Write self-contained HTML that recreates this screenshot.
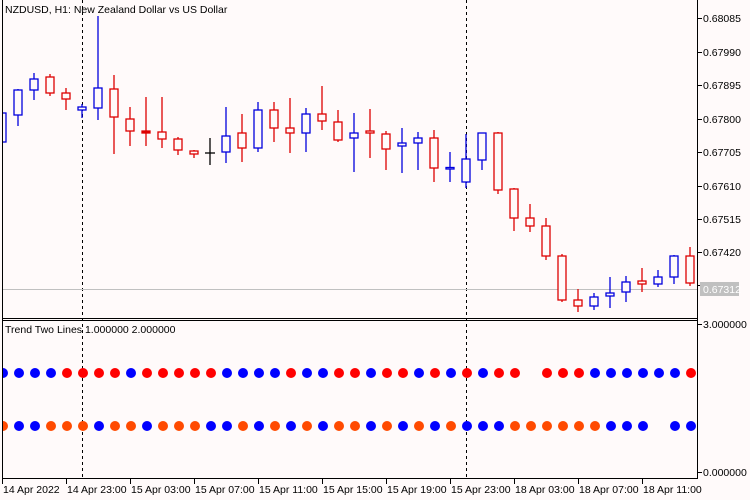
<!DOCTYPE html>
<html><head><meta charset="utf-8"><style>
html,body{margin:0;padding:0;background:#fffafa;}
svg{display:block;font-family:"Liberation Sans",sans-serif;font-size:10.5px;}
</style></head><body>
<svg width="750" height="500" viewBox="0 0 750 500" xmlns="http://www.w3.org/2000/svg">
<rect width="750" height="500" fill="#fffafa"/>
<!-- frames -->
<line x1="2.5" y1="0" x2="2.5" y2="479" stroke="#000"/>
<line x1="697.5" y1="0" x2="697.5" y2="479" stroke="#000"/>
<line x1="2" y1="318.5" x2="698" y2="318.5" stroke="#000"/>
<line x1="2" y1="320.5" x2="698" y2="320.5" stroke="#000"/>
<line x1="2" y1="478.5" x2="698" y2="478.5" stroke="#000"/>
<!-- dashed verticals -->
<line x1="82.5" y1="0" x2="82.5" y2="478" stroke="#000" stroke-dasharray="3,3"/>
<line x1="466.5" y1="0" x2="466.5" y2="478" stroke="#000" stroke-dasharray="3,3"/>
<!-- current price line -->
<line x1="3" y1="289.5" x2="697" y2="289.5" stroke="#c0c0c0"/>
<text x="5" y="13" fill="#000">NZDUSD, H1:  New Zealand Dollar vs US Dollar</text>
<!-- candles -->
<g stroke-width="1.3" fill="#fffafa">
<g stroke="#0000dd">
<line x1="2" y1="105" x2="2" y2="150"/><rect x="-2" y="113" width="8" height="29"/>
<line x1="18" y1="89" x2="18" y2="126"/><rect x="14" y="90" width="8" height="25"/>
<line x1="34" y1="73" x2="34" y2="100"/><rect x="30" y="79" width="8" height="11"/>
<line x1="82" y1="104" x2="82" y2="118"/><rect x="78" y="107" width="8" height="3"/>
<line x1="98" y1="16" x2="98" y2="120"/><rect x="94" y="88" width="8" height="20"/>
<line x1="226" y1="107" x2="226" y2="163"/><rect x="222" y="136" width="8" height="16"/>
<line x1="258" y1="102" x2="258" y2="152"/><rect x="254" y="110" width="8" height="38"/>
<line x1="306" y1="108" x2="306" y2="152"/><rect x="302" y="114" width="8" height="19"/>
<line x1="354" y1="113" x2="354" y2="172"/><rect x="350" y="133" width="8" height="5"/>
<line x1="402" y1="128" x2="402" y2="173"/><rect x="398" y="143" width="8" height="3"/>
<line x1="418" y1="132" x2="418" y2="170"/><rect x="414" y="138" width="8" height="5"/>
<line x1="450" y1="152" x2="450" y2="182"/><rect x="446" y="167.5" width="8" height="1.5"/>
<line x1="466" y1="134" x2="466" y2="188"/><rect x="462" y="159" width="8" height="23"/>
<line x1="482" y1="133" x2="482" y2="170"/><rect x="478" y="133" width="8" height="27"/>
<line x1="594" y1="293" x2="594" y2="310"/><rect x="590" y="297" width="8" height="9"/>
<line x1="610" y1="277" x2="610" y2="308"/><rect x="606" y="293" width="8" height="3"/>
<line x1="626" y1="276" x2="626" y2="302"/><rect x="622" y="282" width="8" height="10"/>
<line x1="658" y1="270" x2="658" y2="287"/><rect x="654" y="277" width="8" height="7"/>
<line x1="674" y1="255" x2="674" y2="284"/><rect x="670" y="256" width="8" height="21"/>
</g>
<g stroke="#dd0000">
<line x1="50" y1="74" x2="50" y2="96"/><rect x="46" y="77" width="8" height="16"/>
<line x1="66" y1="88" x2="66" y2="110"/><rect x="62" y="93" width="8" height="6"/>
<line x1="114" y1="75" x2="114" y2="154"/><rect x="110" y="89" width="8" height="28"/>
<line x1="130" y1="107" x2="130" y2="146"/><rect x="126" y="119" width="8" height="12"/>
<line x1="146" y1="97" x2="146" y2="146"/><rect x="142" y="131" width="8" height="2" fill="#dd0000"/>
<line x1="162" y1="97" x2="162" y2="148"/><rect x="158" y="132" width="8" height="7"/>
<line x1="178" y1="137" x2="178" y2="155"/><rect x="174" y="139" width="8" height="11"/>
<line x1="194" y1="150" x2="194" y2="158"/><rect x="190" y="151" width="8" height="3"/>
<line x1="242" y1="114" x2="242" y2="162"/><rect x="238" y="133" width="8" height="15"/>
<line x1="274" y1="102" x2="274" y2="142"/><rect x="270" y="110" width="8" height="18"/>
<line x1="290" y1="98" x2="290" y2="153"/><rect x="286" y="128" width="8" height="5"/>
<line x1="322" y1="86" x2="322" y2="130"/><rect x="318" y="114" width="8" height="7"/>
<line x1="338" y1="110" x2="338" y2="142"/><rect x="334" y="122" width="8" height="18"/>
<line x1="370" y1="109" x2="370" y2="158"/><rect x="366" y="131" width="8" height="2"/>
<line x1="386" y1="131" x2="386" y2="170"/><rect x="382" y="134" width="8" height="15"/>
<line x1="434" y1="130" x2="434" y2="182"/><rect x="430" y="138" width="8" height="30"/>
<line x1="498" y1="132" x2="498" y2="194"/><rect x="494" y="133" width="8" height="57"/>
<line x1="514" y1="188" x2="514" y2="231"/><rect x="510" y="189" width="8" height="29"/>
<line x1="530" y1="204" x2="530" y2="232"/><rect x="526" y="218" width="8" height="8"/>
<line x1="546" y1="218" x2="546" y2="260"/><rect x="542" y="226" width="8" height="30"/>
<line x1="562" y1="254" x2="562" y2="302"/><rect x="558" y="256" width="8" height="44"/>
<line x1="578" y1="289" x2="578" y2="312"/><rect x="574" y="300" width="8" height="6"/>
<line x1="642" y1="268" x2="642" y2="292"/><rect x="638" y="281" width="8" height="3"/>
<line x1="690" y1="247" x2="690" y2="286"/><rect x="686" y="256" width="8" height="27"/>
</g>
<g stroke="#000"><line x1="210" y1="138" x2="210" y2="165"/><line x1="205" y1="153" x2="215" y2="153"/></g>
</g>
<rect x="0" y="0" width="2" height="318" fill="#fffafa"/>
<line x1="2.5" y1="0" x2="2.5" y2="479" stroke="#000"/>
<!-- price axis -->
<g stroke="#000">
<line x1="697" y1="18.5" x2="702" y2="18.5"/><line x1="697" y1="52.5" x2="702" y2="52.5"/>
<line x1="697" y1="85.5" x2="702" y2="85.5"/><line x1="697" y1="119.5" x2="702" y2="119.5"/>
<line x1="697" y1="152.5" x2="702" y2="152.5"/><line x1="697" y1="186.5" x2="702" y2="186.5"/>
<line x1="697" y1="219.5" x2="702" y2="219.5"/><line x1="697" y1="252.5" x2="702" y2="252.5"/>
<line x1="697" y1="285.5" x2="702" y2="285.5"/>
<line x1="697" y1="324.5" x2="702" y2="324.5"/><line x1="697" y1="472.5" x2="702" y2="472.5"/>
</g>
<g fill="#000">
<text x="703" y="22">0.68085</text><text x="703" y="56">0.67990</text>
<text x="703" y="89">0.67895</text><text x="703" y="123">0.67800</text>
<text x="703" y="156">0.67705</text><text x="703" y="190">0.67610</text>
<text x="703" y="223">0.67515</text><text x="703" y="256">0.67420</text>
<text x="703" y="328">3.000000</text><text x="703" y="476">0.000000</text>
</g>
<rect x="700" y="282" width="39" height="14" fill="#c0c0c0"/>
<text x="703" y="293" fill="#fff">0.67312</text>
<!-- indicator -->
<text x="5" y="333" fill="#000">Trend Two Lines 1.000000 2.000000</text>
<g id="dots"></g>
<g>
<circle cx="3" cy="373" r="5" fill="#00f"/><circle cx="19" cy="373" r="5" fill="#00f"/><circle cx="35" cy="373" r="5" fill="#00f"/><circle cx="51" cy="373" r="5" fill="#00f"/><circle cx="67" cy="373" r="5" fill="#f00"/><circle cx="83" cy="373" r="5" fill="#f00"/><circle cx="99" cy="373" r="5" fill="#f00"/><circle cx="115" cy="373" r="5" fill="#f00"/><circle cx="131" cy="373" r="5" fill="#00f"/><circle cx="147" cy="373" r="5" fill="#f00"/><circle cx="163" cy="373" r="5" fill="#f00"/><circle cx="179" cy="373" r="5" fill="#f00"/><circle cx="195" cy="373" r="5" fill="#f00"/><circle cx="211" cy="373" r="5" fill="#f00"/><circle cx="227" cy="373" r="5" fill="#00f"/><circle cx="243" cy="373" r="5" fill="#00f"/>
<circle cx="259" cy="373" r="5" fill="#00f"/><circle cx="275" cy="373" r="5" fill="#00f"/><circle cx="291" cy="373" r="5" fill="#f00"/><circle cx="307" cy="373" r="5" fill="#00f"/><circle cx="323" cy="373" r="5" fill="#00f"/><circle cx="339" cy="373" r="5" fill="#f00"/><circle cx="355" cy="373" r="5" fill="#f00"/><circle cx="371" cy="373" r="5" fill="#00f"/><circle cx="387" cy="373" r="5" fill="#f00"/><circle cx="403" cy="373" r="5" fill="#f00"/><circle cx="419" cy="373" r="5" fill="#00f"/><circle cx="435" cy="373" r="5" fill="#f00"/><circle cx="451" cy="373" r="5" fill="#00f"/><circle cx="467" cy="373" r="5" fill="#f00"/><circle cx="483" cy="373" r="5" fill="#00f"/><circle cx="499" cy="373" r="5" fill="#f00"/><circle cx="515" cy="373" r="5" fill="#f00"/><circle cx="547" cy="373" r="5" fill="#f00"/><circle cx="563" cy="373" r="5" fill="#f00"/><circle cx="579" cy="373" r="5" fill="#f00"/><circle cx="595" cy="373" r="5" fill="#00f"/><circle cx="611" cy="373" r="5" fill="#00f"/><circle cx="627" cy="373" r="5" fill="#00f"/><circle cx="643" cy="373" r="5" fill="#00f"/><circle cx="659" cy="373" r="5" fill="#00f"/><circle cx="675" cy="373" r="5" fill="#00f"/><circle cx="691" cy="373" r="5" fill="#f00"/>
<circle cx="3" cy="426" r="5" fill="#ff4a00"/><circle cx="19" cy="426" r="5" fill="#00f"/><circle cx="35" cy="426" r="5" fill="#00f"/><circle cx="51" cy="426" r="5" fill="#ff4a00"/><circle cx="67" cy="426" r="5" fill="#ff4a00"/><circle cx="83" cy="426" r="5" fill="#ff4a00"/><circle cx="99" cy="426" r="5" fill="#00f"/><circle cx="115" cy="426" r="5" fill="#ff4a00"/><circle cx="131" cy="426" r="5" fill="#ff4a00"/><circle cx="147" cy="426" r="5" fill="#00f"/><circle cx="163" cy="426" r="5" fill="#ff4a00"/><circle cx="179" cy="426" r="5" fill="#ff4a00"/><circle cx="195" cy="426" r="5" fill="#ff4a00"/><circle cx="211" cy="426" r="5" fill="#00f"/><circle cx="227" cy="426" r="5" fill="#00f"/><circle cx="243" cy="426" r="5" fill="#ff4a00"/>
<circle cx="259" cy="426" r="5" fill="#00f"/><circle cx="275" cy="426" r="5" fill="#ff4a00"/><circle cx="291" cy="426" r="5" fill="#00f"/><circle cx="307" cy="426" r="5" fill="#ff4a00"/><circle cx="323" cy="426" r="5" fill="#00f"/><circle cx="339" cy="426" r="5" fill="#ff4a00"/><circle cx="355" cy="426" r="5" fill="#ff4a00"/><circle cx="371" cy="426" r="5" fill="#00f"/><circle cx="387" cy="426" r="5" fill="#ff4a00"/><circle cx="403" cy="426" r="5" fill="#00f"/><circle cx="419" cy="426" r="5" fill="#ff4a00"/><circle cx="435" cy="426" r="5" fill="#00f"/><circle cx="451" cy="426" r="5" fill="#ff4a00"/><circle cx="467" cy="426" r="5" fill="#00f"/><circle cx="483" cy="426" r="5" fill="#00f"/><circle cx="499" cy="426" r="5" fill="#00f"/><circle cx="515" cy="426" r="5" fill="#ff4a00"/><circle cx="531" cy="426" r="5" fill="#ff4a00"/><circle cx="547" cy="426" r="5" fill="#ff4a00"/><circle cx="563" cy="426" r="5" fill="#ff4a00"/><circle cx="579" cy="426" r="5" fill="#ff4a00"/><circle cx="595" cy="426" r="5" fill="#ff4a00"/><circle cx="611" cy="426" r="5" fill="#00f"/><circle cx="627" cy="426" r="5" fill="#00f"/><circle cx="643" cy="426" r="5" fill="#00f"/><circle cx="675" cy="426" r="5" fill="#00f"/><circle cx="691" cy="426" r="5" fill="#00f"/>
</g>
<rect x="0" y="360" width="2.5" height="80" fill="#fffafa"/>
<line x1="2.5" y1="320" x2="2.5" y2="479" stroke="#000"/>
<!-- time axis -->
<g stroke="#000">
<line x1="2.5" y1="478" x2="2.5" y2="484"/><line x1="66.5" y1="478" x2="66.5" y2="484"/>
<line x1="130.5" y1="478" x2="130.5" y2="484"/><line x1="194.5" y1="478" x2="194.5" y2="484"/>
<line x1="258.5" y1="478" x2="258.5" y2="484"/><line x1="322.5" y1="478" x2="322.5" y2="484"/>
<line x1="386.5" y1="478" x2="386.5" y2="484"/><line x1="450.5" y1="478" x2="450.5" y2="484"/>
<line x1="514.5" y1="478" x2="514.5" y2="484"/><line x1="578.5" y1="478" x2="578.5" y2="484"/>
<line x1="642.5" y1="478" x2="642.5" y2="484"/>
</g>
<g fill="#000">
<text x="3" y="493">14 Apr 2022</text><text x="67" y="493">14 Apr 23:00</text>
<text x="131" y="493">15 Apr 03:00</text><text x="195" y="493">15 Apr 07:00</text>
<text x="259" y="493">15 Apr 11:00</text><text x="323" y="493">15 Apr 15:00</text>
<text x="387" y="493">15 Apr 19:00</text><text x="451" y="493">15 Apr 23:00</text>
<text x="515" y="493">18 Apr 03:00</text><text x="579" y="493">18 Apr 07:00</text>
<text x="643" y="493">18 Apr 11:00</text>
</g>
</svg>
</body></html>
